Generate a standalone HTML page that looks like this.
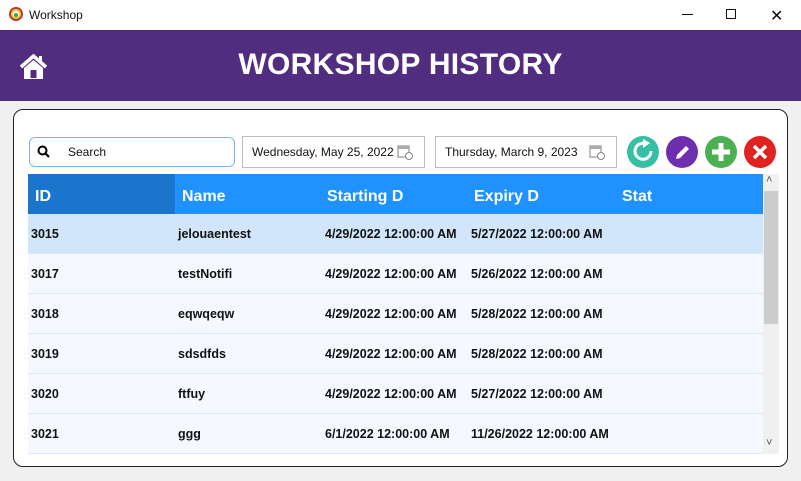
<!DOCTYPE html>
<html><head><meta charset="utf-8"><style>
*{margin:0;padding:0;box-sizing:border-box}
body{width:801px;height:481px;background:#f0f0f0;font-family:"Liberation Sans",sans-serif;position:relative;overflow:hidden}
.abs{position:absolute}
.tb{left:0;top:0;width:801px;height:30px;background:#fff}
.hdr{left:0;top:30px;width:801px;height:71px;background:#512d80}
.title{left:0;width:801px;top:48px;text-align:center;color:#fff;font-weight:bold;font-size:30px;letter-spacing:0.3px}
.panel{left:13px;top:109px;width:775px;height:358px;border:1px solid #222;border-radius:10px;background:#fff}
.box{background:#fff;border:1px solid #bdbdbd;font-size:12px;color:#111}
.hcell{color:#fff;font-weight:bold;font-size:16px;top:188px}
.row{left:28px;width:735px;height:40px;background:#f5f9ff;border-bottom:1px solid #dbe8f6}
.c{font-size:12.5px;font-weight:bold;color:#111}
</style></head><body>
<div class="abs tb"></div>
<svg class="abs" style="left:9px;top:7px" width="14" height="14" viewBox="0 0 14 14"><circle cx="7" cy="7" r="6" fill="none" stroke="#c0392b" stroke-width="2"/><circle cx="7" cy="7" r="4" fill="none" stroke="#f1c40f" stroke-width="1.5"/><circle cx="7" cy="8" r="2" fill="#27ae60"/></svg>
<div class="abs" style="left:29px;top:8px;font-size:12px;color:#111">Workshop</div>
<div class="abs" style="left:682px;top:14px;width:11px;height:1px;background:#111"></div>
<div class="abs" style="left:726px;top:9px;width:10px;height:10px;border:1px solid #111"></div>
<div class="abs" style="left:770px;top:6px;font-size:16px;color:#111">✕</div>
<div class="abs hdr"></div>
<svg class="abs" style="left:20px;top:54px" width="27" height="26" viewBox="0 0 27 26"><path d="M1 13 L13.5 2 L26 13" fill="none" stroke="#fff" stroke-width="3.5" stroke-linejoin="miter"/><rect x="19" y="2" width="3" height="7" fill="#fff"/><path d="M4 14 L13.5 6 L23 14 V25 H4Z" fill="#fff"/><rect x="10.5" y="16" width="6" height="8" fill="#512d80"/></svg>
<div class="abs title">WORKSHOP HISTORY</div>
<div class="abs panel"></div>
<div class="abs box" style="left:29px;top:137px;width:206px;height:30px;border-color:#7ab8f5;border-radius:6px"></div>
<svg class="abs" style="left:37px;top:145px" width="14" height="14" viewBox="0 0 14 14"><circle cx="5.5" cy="5.5" r="4" fill="none" stroke="#000" stroke-width="2"/><path d="M8.5 8.5 L12 12" stroke="#000" stroke-width="2.2"/></svg>
<div class="abs" style="left:68px;top:145px;font-size:12px;color:#111">Search</div>
<div class="abs box" style="left:242px;top:136px;width:183px;height:32px"></div>
<div class="abs" style="left:252px;top:145px;font-size:12px;color:#111">Wednesday, May 25, 2022</div>
<div class="abs box" style="left:435px;top:136px;width:182px;height:32px"></div>
<div class="abs" style="left:445px;top:145px;font-size:12px;color:#111">Thursday, March 9, 2023</div>
<svg class="abs" style="left:397px;top:144px" width="16" height="16" viewBox="0 0 16 16"><rect x="1" y="2" width="11" height="11" fill="none" stroke="#aaa" stroke-width="1.5"/><rect x="1" y="2" width="11" height="3" fill="#aaa"/><circle cx="12" cy="12" r="3.5" fill="#fff" stroke="#888"/></svg>
<svg class="abs" style="left:589px;top:144px" width="16" height="16" viewBox="0 0 16 16"><rect x="1" y="2" width="11" height="11" fill="none" stroke="#aaa" stroke-width="1.5"/><rect x="1" y="2" width="11" height="3" fill="#aaa"/><circle cx="12" cy="12" r="3.5" fill="#fff" stroke="#888"/></svg>
<svg class="abs" style="left:620px;top:130px" width="170" height="44" viewBox="620 130 170 44">
<circle cx="643" cy="152" r="16" fill="#35bfa4"/><path d="M651 151 A8 8 0 1 1 645 143.5" fill="none" stroke="#fff" stroke-width="3"/><path d="M643 139 L650 143 L643 148Z" fill="#fff"/>
<circle cx="682" cy="152" r="16" fill="#6d2fb0"/><path d="M676 159 L677 155 L686 146 L689 149 L680 158Z" fill="#fff"/>
<circle cx="721" cy="152" r="16" fill="#4caf50"/><rect x="712" y="149.5" width="18" height="5" fill="#fff"/><rect x="718.5" y="143" width="5" height="18" fill="#fff"/>
<circle cx="760" cy="152" r="16" fill="#e02222"/><path d="M754 146 L766 158 M766 146 L754 158" stroke="#fff" stroke-width="3.5"/>
</svg>
<div class="abs" style="left:28px;top:174px;width:735px;height:40px;background:#1f92ff"></div>
<div class="abs" style="left:28px;top:174px;width:147px;height:40px;background:#1c75cc"></div>
<div class="abs hcell" style="left:35px">ID</div>
<div class="abs hcell" style="left:182px">Name</div>
<div class="abs hcell" style="left:327px">Starting D</div>
<div class="abs hcell" style="left:474px">Expiry D</div>
<div class="abs hcell" style="left:622px">Stat</div>
<div class="abs" style="left:763px;top:174px;width:16px;height:280px;background:#f0f0f0"></div>
<div class="abs" style="left:764px;top:191px;width:14px;height:133px;background:#cdcdcd"></div>
<div class="abs" style="left:766px;top:174px;font-size:11px;color:#555">˄</div>
<div class="abs" style="left:766px;top:437px;font-size:11px;color:#555">˅</div>
<div class="abs row" style="top:214px;background:#d2e6fb"></div>
<div class="abs row" style="top:254px"></div>
<div class="abs row" style="top:294px"></div>
<div class="abs row" style="top:334px"></div>
<div class="abs row" style="top:374px"></div>
<div class="abs row" style="top:414px;height:40px"></div>
<div class="abs c" style="left:31px;top:227px">3015</div><div class="abs c" style="left:178px;top:227px">jelouaentest</div><div class="abs c" style="left:325px;top:227px">4/29/2022 12:00:00 AM</div><div class="abs c" style="left:471px;top:227px">5/27/2022 12:00:00 AM</div>
<div class="abs c" style="left:31px;top:267px">3017</div><div class="abs c" style="left:178px;top:267px">testNotifi</div><div class="abs c" style="left:325px;top:267px">4/29/2022 12:00:00 AM</div><div class="abs c" style="left:471px;top:267px">5/26/2022 12:00:00 AM</div>
<div class="abs c" style="left:31px;top:307px">3018</div><div class="abs c" style="left:178px;top:307px">eqwqeqw</div><div class="abs c" style="left:325px;top:307px">4/29/2022 12:00:00 AM</div><div class="abs c" style="left:471px;top:307px">5/28/2022 12:00:00 AM</div>
<div class="abs c" style="left:31px;top:347px">3019</div><div class="abs c" style="left:178px;top:347px">sdsdfds</div><div class="abs c" style="left:325px;top:347px">4/29/2022 12:00:00 AM</div><div class="abs c" style="left:471px;top:347px">5/28/2022 12:00:00 AM</div>
<div class="abs c" style="left:31px;top:387px">3020</div><div class="abs c" style="left:178px;top:387px">ftfuy</div><div class="abs c" style="left:325px;top:387px">4/29/2022 12:00:00 AM</div><div class="abs c" style="left:471px;top:387px">5/27/2022 12:00:00 AM</div>
<div class="abs c" style="left:31px;top:427px">3021</div><div class="abs c" style="left:178px;top:427px">ggg</div><div class="abs c" style="left:325px;top:427px">6/1/2022 12:00:00 AM</div><div class="abs c" style="left:471px;top:427px">11/26/2022 12:00:00 AM</div>
</body></html>
